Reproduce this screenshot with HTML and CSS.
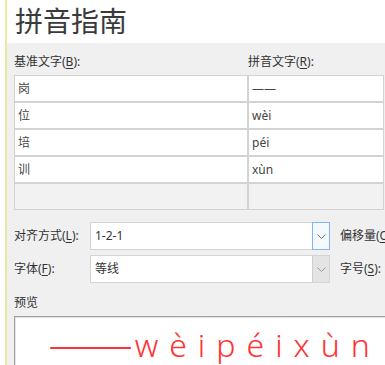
FILE: index.html
```html
<!DOCTYPE html>
<html>
<head>
    <title>拼音指南</title>
    <link rel="stylesheet" href="styles.css">
</head>
<body>

<div class="dialog">

<div class="title">拼音指南</div>

<div class="panel">

<div class="heads">
<div>基准文字(<u>B</u>):</div>
<div>拼音文字(<u>R</u>):</div>
</div>

<div class="grid">
<div class="cell">岗</div><div class="cell">——</div>
<div class="cell">位</div><div class="cell">wèi</div>
<div class="cell">培</div><div class="cell">péi</div>
<div class="cell">训</div><div class="cell">xùn</div>
<div class="cell empty"></div><div class="cell empty"></div>
</div>

<div class="form-row first">
<div class="label">对齐方式(<u>L</u>):</div>
<div class="select">
    <div class="value">1-2-1</div>
    <div class="drop active">
        <svg width="9" height="5" viewBox="0 0 9 5"><path d="M0.5 0.5 L4.5 4.5 L8.5 0.5" fill="none" stroke="#777" stroke-width="1"/></svg>
    </div>
</div>
<div class="label side">偏移量(<u>O</u>):</div>
</div>

<div class="form-row">
<div class="label">字体(<u>F</u>):</div>
<div class="select">
    <div class="value">等线</div>
    <div class="drop off">
        <svg width="9" height="5" viewBox="0 0 9 5"><path d="M0.5 0.5 L4.5 4.5 L8.5 0.5" fill="none" stroke="#999" stroke-width="1"/></svg>
    </div>
</div>
<div class="label side">字号(<u>S</u>):</div>
</div>

<div class="label preview-label">预览</div>

<div class="preview">
<span class="dash">——</span><span class="ruby">wèipéixùn</span>
</div>

</div>
</div>

</body>
</html>
```

FILE: styles.css
```css
body{
    margin: 0;
    width: 385px;
    height: 365px;
    overflow: hidden;
    background-color: white;
    font-family: "Noto Sans", "Noto Sans CJK SC", sans-serif;
    color: #333;
}

.dialog{
    margin-left: 5px;
    border-left: 2px solid #ebe8a4;
    height: 365px;
    overflow: hidden;
}

.title{
    height: 43px;
    line-height: 40px;
    padding-left: 8px;
    font-size: 28px;
    font-family: "Noto Sans CJK SC", sans-serif;
    color: #3a3a3a;
    background-color: white;
}

.panel{
    background-color: #f0f0f0;
    padding-left: 7px;
    height: 322px;
}

u{
    text-decoration-thickness: 1px;
    text-underline-offset: 2px;
}

.heads{
    display: grid;
    grid-template-columns: 234px 1fr;
    padding-top: 11px;
    height: 21px;
    font-size: 12px;
    line-height: 16px;
    white-space: nowrap;
}

.grid{
    display: grid;
    grid-template-columns: 232px 1fr;
    grid-auto-rows: 25px;
    gap: 2px;
    width: 368px;
    background-color: #d3d3d3;
    border: 1px solid #d3d3d3;
}

.cell{
    background-color: white;
    font-size: 12px;
    line-height: 25px;
    padding-left: 3px;
    color: #444;
}

.cell.empty{
    background-color: #f2f2f2;
}

.form-row{
    display: flex;
    align-items: center;
    height: 28px;
    margin-top: 5px;
    white-space: nowrap;
}

.form-row.first{
    margin-top: 12px;
}

.label{
    font-size: 12px;
    line-height: 16px;
    color: #333;
    white-space: nowrap;
    flex-shrink: 0;
}

.form-row .label{
    width: 76px;
}

.form-row .label.side{
    margin-left: 10px;
}

.select{
    display: flex;
    flex-shrink: 0;
    width: 240px;
    height: 28px;
    box-sizing: border-box;
    border: 1px solid #d4d4d4;
    background-color: white;
}

.value{
    flex: 1;
    font-size: 12px;
    line-height: 26px;
    padding-left: 4px;
    color: #333;
}

.drop{
    width: 17px;
    display: flex;
    align-items: center;
    justify-content: center;
    box-sizing: border-box;
}

.drop.active{
    border: 1px solid #80b6ea;
    background-color: #f4f9fe;
    margin: -1px -1px -1px 0;
    width: 18px;
}

.drop.off{
    background-color: #e4e4e4;
    border-left: 1px solid #cfcfcf;
}

.preview-label{
    margin-top: 12px;
    height: 21px;
}

.preview{
    height: 60px;
    background-color: white;
    border-top: 1px solid #a0a0a0;
    border-left: 1px solid #a0a0a0;
    box-shadow: inset 1px 1px 0 #e3e3e3;
    padding-left: 33px;
    padding-top: 6px;
    font-size: 32px;
    line-height: 40px;
    color: #ff3333;
    white-space: nowrap;
}

.dash{
    display: inline-block;
    font-family: "Noto Sans CJK SC", sans-serif;
    transform: scaleX(1.59);
    transform-origin: left;
    margin-right: 33px;
}

.ruby{
    font-weight: 300;
    letter-spacing: 11px;
}
```
